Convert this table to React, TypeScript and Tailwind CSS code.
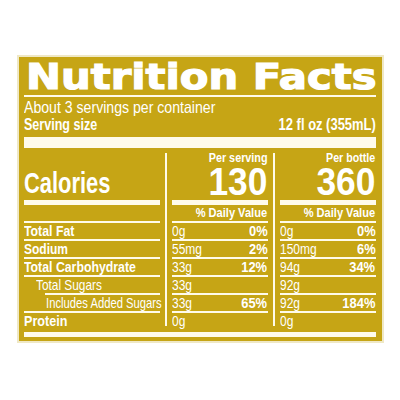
import React from 'react';

// condensed look: Liberation Sans squeezed horizontally
const N = ({ s, r, children }: { s: string; r?: boolean; children: React.ReactNode }) => (
  <span className={`inline-block whitespace-nowrap ${s} ${r ? 'origin-right' : 'origin-left'}`}>{children}</span>
);

const rows = [
  { label: 'Total Fat', pad: '', s: 'scale-x-[0.82]', bold: true, a: '0g', ap: '0%', b: '0g', bp: '0%', line: '' },
  { label: 'Sodium', pad: '', s: 'scale-x-[0.8]', bold: true, a: '55mg', ap: '2%', b: '150mg', bp: '6%', line: '' },
  { label: 'Total Carbohydrate', pad: '', s: 'scale-x-[0.82]', bold: true, a: '33g', ap: '12%', b: '94g', bp: '34%', line: '' },
  { label: 'Total Sugars', pad: 'pl-[12px]', s: 'scale-x-[0.79]', bold: false, a: '33g', ap: '', b: '92g', bp: '', line: 'ml-[21px]' },
  { label: 'Includes Added Sugars', pad: 'pl-[22px]', s: 'scale-x-[0.75]', bold: false, a: '33g', ap: '65%', b: '92g', bp: '184%', line: '' },
  { label: 'Protein', pad: '', s: 'scale-x-[0.84]', bold: true, a: '0g', ap: '', b: '0g', bp: '', line: '', last: true },
];

const ValueCol = ({ per, perS, big, k }: { per: string; perS: string; big: string; k: 'a' | 'b' }) => (
  <div className="flex w-[96px] flex-col">
    <div className="flex h-[47px] flex-col items-end">
      <div className="mt-[-1px] h-[12px] text-[13.5px] font-bold leading-[12px]">
        <N s={perS} r>{per}</N>
      </div>
      <div className="mt-[3px] h-[30px] text-[38px] font-bold leading-[30px]">
        <N s="scale-x-[0.93]" r>{big}</N>
      </div>
    </div>
    <div className="h-[5px] bg-[#fffbea]" />
    <div className="flex h-[16px] items-center justify-end text-[13.5px] font-bold leading-[16px]">
      <N s="scale-x-[0.82]" r>% Daily Value</N>
    </div>
    <div className="h-[2px] bg-[#fffbea]" />
    {rows.map((r, i) => (
      <div key={i} className="flex flex-col">
        <div className="flex h-[16px] items-center justify-between text-[15px] leading-[16px]">
          <N s="scale-x-[0.8]">{k === 'a' ? r.a : r.b}</N>
          <span className="font-bold">
            <N s="scale-x-[0.86]" r>{k === 'a' ? r.ap : r.bp}</N>
          </span>
        </div>
        {!r.last && <div className="h-[2px] bg-[#fffbea]" />}
      </div>
    ))}
  </div>
);

const Divider = () => (
  <div className="flex w-[12px] justify-center pb-[3px]">
    <div className="w-[2px] bg-[#fffbea]" />
  </div>
);

export default function App() {
  return (
    <div className="flex h-[400px] w-[400px] items-start justify-center bg-white pt-[55px]">
      <div className="border-2 border-[#efe8c6]">
        <div className="flex w-[363px] flex-col bg-[#c6a515] pl-[5px] pr-[6px] pt-[2px] pb-[4px] font-['Liberation_Sans',Arial,sans-serif] text-white">
          <div className="ml-[2px] h-[36px] whitespace-nowrap font-['DejaVu_Sans',sans-serif] text-[36px] font-black leading-[36px] [-webkit-text-stroke:1.2px_white]">
            <N s="scale-x-[1.16]">Nutrition Facts</N>
          </div>
          <div className="h-[2px] bg-[#fffbea]" />
          <div className="mt-[2px] h-[17px] text-[16.5px] leading-[17px]">
            <N s="scale-x-[0.855]">About 3 servings per container</N>
          </div>
          <div className="flex h-[17px] justify-between text-[16.5px] font-bold leading-[17px]">
            <N s="scale-x-[0.76]">Serving size</N>
            <N s="scale-x-[0.785]" r>12 fl oz (355mL)</N>
          </div>
          <div className="mt-[4px] h-[11px] bg-[#fffbea]" />
          <div className="mt-[5px] flex">
            <div className="flex w-[136px] flex-col">
              <div className="flex h-[47px] items-end pb-[3px] text-[30px] font-bold leading-[28px]">
                <N s="scale-x-[0.73]">Calories</N>
              </div>
              <div className="h-[5px] bg-[#fffbea]" />
              <div className="h-[16px]" />
              <div className="h-[2px] bg-[#fffbea]" />
              {rows.map((r, i) => (
                <div key={i} className="flex flex-col">
                  <div className={`flex h-[16px] items-center text-[15px] leading-[16px] ${r.bold ? 'font-bold' : ''} ${r.pad}`}>
                    <N s={r.s}>{r.label}</N>
                  </div>
                  {!r.last && <div className={`h-[2px] bg-[#fffbea] ${r.line}`} />}
                </div>
              ))}
            </div>
            <Divider />
            <ValueCol per="Per serving" perS="scale-x-[0.8]" big="130" k="a" />
            <Divider />
            <ValueCol per="Per bottle" perS="scale-x-[0.79]" big="360" k="b" />
          </div>
          <div className="mt-[3px] h-[5px] bg-[#fffbea]" />
        </div>
      </div>
    </div>
  );
}
